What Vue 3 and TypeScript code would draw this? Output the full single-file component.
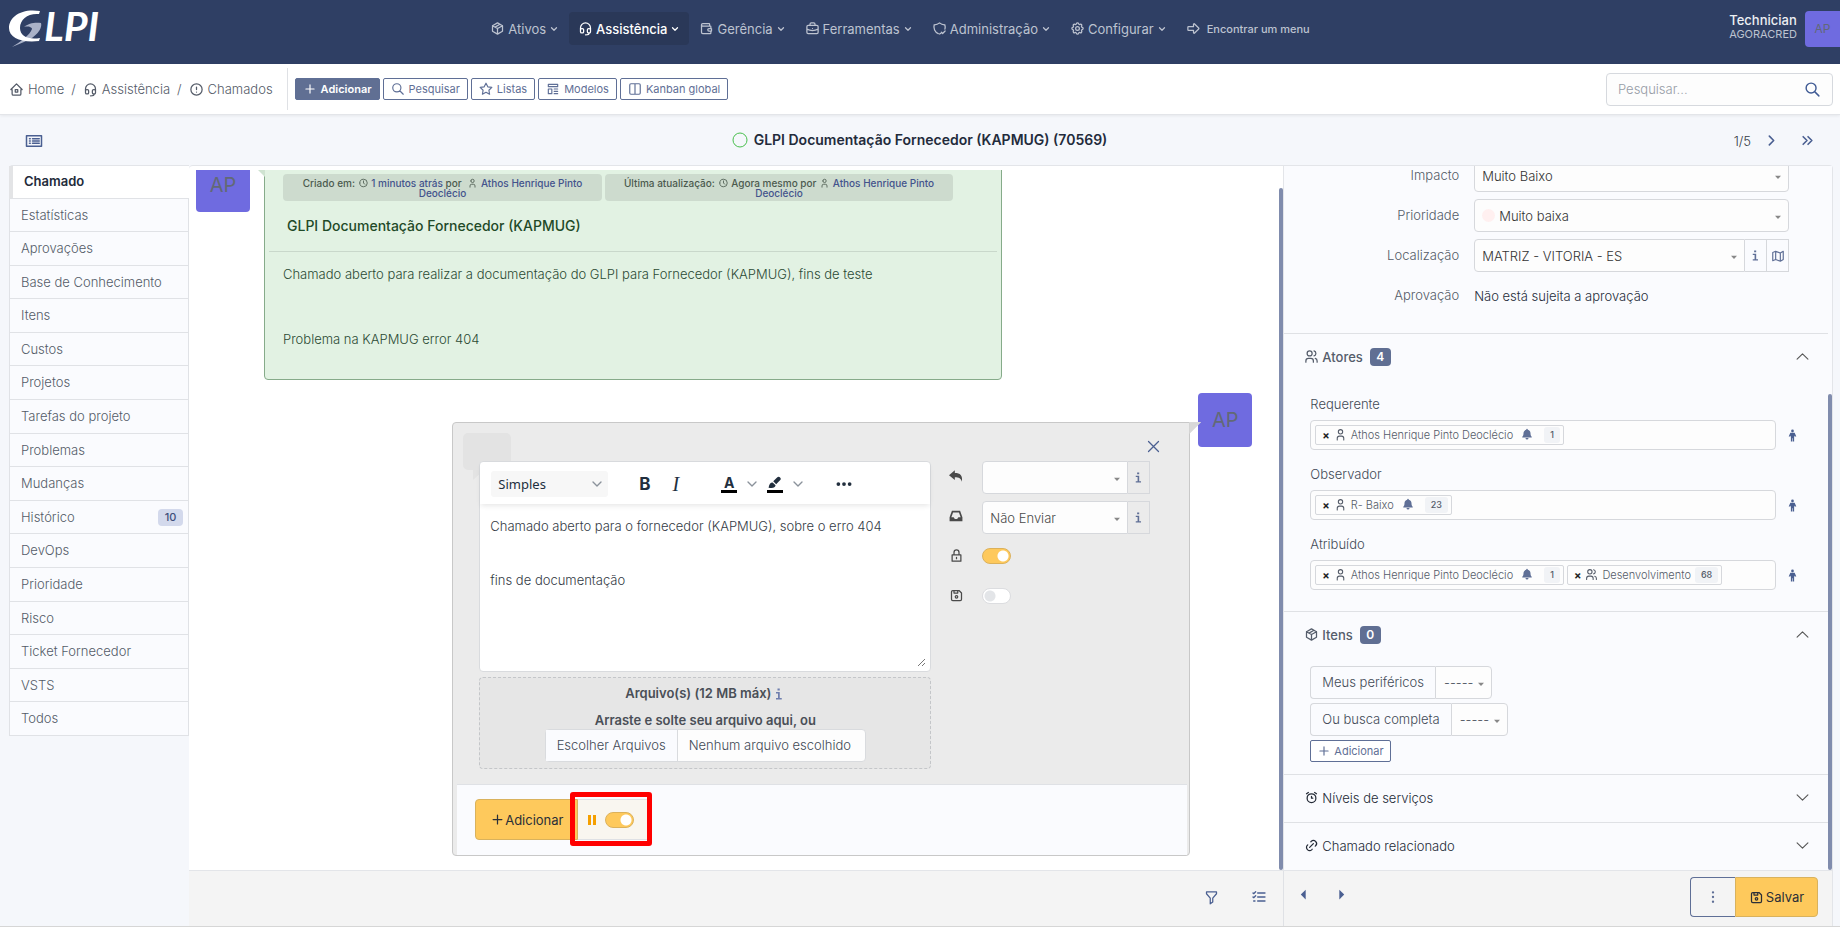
<script setup lang="ts">
import { h, ref } from 'vue'

const paths: Record<string, string> = {
  package: 'M12 3l8 4.5v9l-8 4.5l-8 -4.5v-9z M12 12l8 -4.5 M12 12v9 M12 12l-8 -4.5 M16 5.25l-8 4.5',
  headset: 'M4 14v-3a8 8 0 1 1 16 0v3 M18 19c0 1.657 -2.686 3 -6 3 M4 14a2 2 0 0 1 2 -2h1a2 2 0 0 1 2 2v3a2 2 0 0 1 -2 2h-1a2 2 0 0 1 -2 -2z M15 14a2 2 0 0 1 2 -2h1a2 2 0 0 1 2 2v3a2 2 0 0 1 -2 2h-1a2 2 0 0 1 -2 -2z',
  wallet: 'M17 8v-3a1 1 0 0 0 -1 -1h-10a2 2 0 0 0 0 4h12a1 1 0 0 1 1 1v3m0 4v3a1 1 0 0 1 -1 1h-12a2 2 0 0 1 -2 -2v-12 M20 12v4h-4a2 2 0 0 1 0 -4h4',
  briefcase: 'M3 9a2 2 0 0 1 2 -2h14a2 2 0 0 1 2 2v9a2 2 0 0 1 -2 2h-14a2 2 0 0 1 -2 -2z M8 7v-2a2 2 0 0 1 2 -2h4a2 2 0 0 1 2 2v2 M12 12v.01 M3 13a20 20 0 0 0 18 0',
  shield: 'M10 20.2a12 12 0 0 1 -6.500 -14.2a12 12 0 0 0 8.5 -3a12 12 0 0 0 8.5 3a12 12 0 0 1 .2 7 M12 20.800l2 -1 M15 18l2 2l4 -4',
  settings: 'M10.325 4.317c.426 -1.756 2.924 -1.756 3.35 0a1.724 1.724 0 0 0 2.573 1.066c1.543 -.94 3.31 .826 2.37 2.37a1.724 1.724 0 0 0 1.065 2.572c1.756 .426 1.756 2.924 0 3.35a1.724 1.724 0 0 0 -1.066 2.573c.94 1.543 -.826 3.31 -2.37 2.37a1.724 1.724 0 0 0 -2.572 1.065c-.426 1.756 -2.924 1.756 -3.35 0a1.724 1.724 0 0 0 -2.573 -1.066c-1.543 .94 -3.31 -.826 -2.37 -2.37a1.724 1.724 0 0 0 -1.065 -2.572c-1.756 -.426 -1.756 -2.924 0 -3.35a1.724 1.724 0 0 0 1.066 -2.573c-.94 -1.543 .826 -3.31 2.37 -2.37c1 .608 2.296 .07 2.572 -1.065z M9 12a3 3 0 1 0 6 0a3 3 0 0 0 -6 0',
  arrowBig: 'M4 9h8v-3.586a1 1 0 0 1 1.707 -.707l6.586 6.586a1 1 0 0 1 0 1.414l-6.586 6.586a1 1 0 0 1 -1.707 -.707v-3.586h-8a1 1 0 0 1 -1 -1v-4a1 1 0 0 1 1 -1z',
  home: 'M5 12h-2l9 -9l9 9h-2v7a2 2 0 0 1 -2 2h-10a2 2 0 0 1 -2 -2z M10 12h4v4h-4z',
  alert: 'M3 12a9 9 0 1 0 18 0a9 9 0 1 0 -18 0 M12 8v4 M12 16v.01',
  plus: 'M12 5v14 M5 12h14',
  search: 'M3 10a7 7 0 1 0 14 0a7 7 0 1 0 -14 0 M21 21l-6 -6',
  star: 'M12 17.75l-6.172 3.245l1.179 -6.873l-5 -4.867l6.9 -1l3.086 -6.253l3.086 6.253l6.900 1l-5 4.867l1.179 6.873z',
  template: 'M4 4h16v4h-16z M4 12h6v8h-6z M14 12h6 M14 16h6 M14 20h6',
  columns: 'M5 3h14a2 2 0 0 1 2 2v14a2 2 0 0 1 -2 2h-14a2 2 0 0 1 -2 -2v-14a2 2 0 0 1 2 -2z M12 3v18',
  down: 'M6 9l6 6l6 -6',
  up: 'M2 17l10 -10l10 10',
  wideDown: 'M2 7l10 10l10 -10',
  right: 'M8 4l8 8l-8 8',
  doubleRight: 'M4 5l7 7l-7 7 M13 5l7 7l-7 7',
  close: 'M4 4l16 16 M20 4l-16 16',
  clock: 'M3 12a9 9 0 1 0 18 0a9 9 0 1 0 -18 0 M12 7v5l3 3',
  user: 'M8 7a4 4 0 1 0 8 0a4 4 0 1 0 -8 0 M6 22v-3a4 4 0 0 1 4 -4h4a4 4 0 0 1 4 4v3',
  users: 'M5 7a4 4 0 1 0 8 0a4 4 0 1 0 -8 0 M3 21v-2a4 4 0 0 1 4 -4h4a4 4 0 0 1 4 4v2 M16 3.130a4 4 0 0 1 0 7.750 M21 21v-2a4 4 0 0 0 -3 -3.850',
  lock: 'M5 11h14v10h-14z M8 11v-4a4 4 0 0 1 8 0v4 M12 15v2',
  save: 'M6 4h10l4 4v10a2 2 0 0 1 -2 2h-12a2 2 0 0 1 -2 -2v-12a2 2 0 0 1 2 -2z M10 14a2 2 0 1 0 4 0a2 2 0 1 0 -4 0 M14 4v4h-6v-4',
  map: 'M3 6l5 -2v14l-5 2z M8 4l8 3v14l-8 -3 M16 7l5 -3v14l-5 3',
  alarm: 'M5 13a7 7 0 1 0 14 0a7 7 0 1 0 -14 0 M12 10v3h2 M7 4l-3 2 M17 4l3 2',
  link: 'M9 15l6 -6 M11 6l.463 -.536a5 5 0 0 1 7.071 7.072l-.534 .464 M13 18l-.397 .534a5.068 5.068 0 0 1 -7.127 0a4.972 4.972 0 0 1 0 -7.071l.524 -.463',
  filter: 'M4 3h16v3l-6 7v6l-4 3v-9l-6 -7z',
  checklist: 'M10 6h11 M10 12h11 M10 18h11 M3 6l1 1l3 -3 M3 12l1 1l3 -3 M4 18h2',
  listBox: 'M2 5h20v14h-20z M6 9h1 M6 12h1 M6 15h1 M10 9h9 M10 12h9 M10 15h9',
}

const Icon = (props: { name: string; size?: number; weight?: number }) =>
  h('svg', {
    class: 'icon', width: props.size ?? 16, height: props.size ?? 16, viewBox: '0 0 24 24', fill: 'none',
    stroke: 'currentColor', 'stroke-width': props.weight ?? 2, 'stroke-linecap': 'round', 'stroke-linejoin': 'round', 'aria-hidden': 'true',
  }, [h('path', { d: paths[props.name] })])
Icon.props = ['name', 'size', 'weight']

const solids: Record<string, string> = {
  caret: 'M3 8h18l-9 10z',
  bell: 'M12 1.500a1.500 1.500 0 0 1 1.500 1.500v.7c3.500 .8 5.500 3.300 5.500 6.800c0 4 1 5.500 2.500 7v1.500h-19v-1.500c1.500 -1.500 2.500 -3 2.500 -7c0 -3.500 2 -6 5.500 -6.800v-.7a1.500 1.500 0 0 1 1.500 -1.500z M9 20h6a3 3 0 0 1 -6 0z',
  person: 'M9.500 3.500a2.500 2.500 0 1 0 5 0a2.500 2.500 0 1 0 -5 0 M8 7h8l3 7h-3l-1 -2v11h-2.500v-6h-1v6h-2.500v-11l-1 2h-3z',
  reply: 'M10 2v5c9 0 14 4 12 15c-1 -6 -5 -8 -12 -8v5l-10 -8.500z',
  inbox: 'M5 3h14l4 11v7h-22v-7z M7 6l-3 8h4l2 3h4l2 -3h4l-3 -8z',
  prev: 'M16 3v18l-9 -9z',
  next: 'M8 3v18l9 -9z',
  info: 'M9 1h4.500v4h-4.500z M6 8h7.500v12h4v3h-11.500v-3h4v-9h-4z',
  pause: 'M4 2h6v20h-6z M14 2h6v20h-6z',
  dots: 'M2 12a2.500 2.500 0 1 0 5 0a2.500 2.500 0 1 0 -5 0 M9.500 12a2.500 2.500 0 1 0 5 0a2.500 2.500 0 1 0 -5 0 M17 12a2.500 2.500 0 1 0 5 0a2.500 2.500 0 1 0 -5 0',
  kebab: 'M12 2a2 2 0 1 0 0 4a2 2 0 1 0 0 -4 M12 10a2 2 0 1 0 0 4a2 2 0 1 0 0 -4 M12 18a2 2 0 1 0 0 4a2 2 0 1 0 0 -4',
  brush: 'M1 20c1 -6 3 -9 7 -9l5 5c-1 4 -4 5 -12 4z M9 9l7 -7c3 -3 8 2 5 5l-7 7z',
}

const Solid = (props: { name: string; size?: number }) =>
  h('svg', { class: 'icon', width: props.size ?? 14, height: props.size ?? 14, viewBox: '0 0 24 24', fill: 'currentColor', 'fill-rule': 'evenodd', 'aria-hidden': 'true' },
    [h('path', { d: solids[props.name] })])
Solid.props = ['name', 'size']

const menu = [
  { label: 'Ativos', icon: 'package' },
  { label: 'Assistência', icon: 'headset', active: true },
  { label: 'Gerência', icon: 'wallet' },
  { label: 'Ferramentas', icon: 'briefcase' },
  { label: 'Administração', icon: 'shield' },
  { label: 'Configurar', icon: 'settings' },
]

const actions = [
  { label: 'Adicionar', icon: 'plus', primary: true },
  { label: 'Pesquisar', icon: 'search' },
  { label: 'Listas', icon: 'star' },
  { label: 'Modelos', icon: 'template' },
  { label: 'Kanban global', icon: 'columns' },
]

const tabs: { label: string; count?: number }[] = [
  { label: 'Chamado' }, { label: 'Estatísticas' }, { label: 'Aprovações' }, { label: 'Base de Conhecimento' },
  { label: 'Itens' }, { label: 'Custos' }, { label: 'Projetos' }, { label: 'Tarefas do projeto' },
  { label: 'Problemas' }, { label: 'Mudanças' }, { label: 'Histórico', count: 10 }, { label: 'DevOps' },
  { label: 'Prioridade' }, { label: 'Risco' }, { label: 'Ticket Fornecedor' }, { label: 'VSTS' }, { label: 'Todos' },
]

const actors = [
  { id: 'requerente', label: 'Requerente', chips: [{ name: 'Athos Henrique Pinto Deoclécio', count: 1, group: false }] },
  { id: 'observador', label: 'Observador', chips: [{ name: 'R- Baixo', count: 23, group: false }] },
  { id: 'atribuido', label: 'Atribuído', chips: [{ name: 'Athos Henrique Pinto Deoclécio', count: 1, group: false }, { name: 'Desenvolvimento', count: 68, group: true }] },
]

const message = ref('Chamado aberto para o fornecedor (KAPMUG), sobre o erro 404\n\n\nfins de documentação')
const isPrivate = ref(true)
const saveDraft = ref(false)
const pending = ref(true)
</script>

<template>
  <div class="page">
    <header class="topbar">
      <a href="#" class="logo" aria-label="GLPI">
        <svg width="112" height="56" viewBox="0 0 112 56">
          <path d="M24 27c4 -4 12 -5 17 -4c2 7 -8 16 -17 19l-12 5c8 -5 18 -12 20 -18c0 -2 -5 -3 -8 -2z" fill="#aab2c8" />
          <path d="M40 11c-19 -3 -31 6 -31 17c0 10 13 15 30 13l1 -3c-12 2 -20 -2 -20 -10c0 -9 8 -15 19 -14z" fill="#fff" />
          <text x="44" y="41" class="logo-text">LPI</text>
        </svg>
      </a>
      <nav class="menu">
        <a v-for="m in menu" :key="m.label" href="#" :class="['menu-item', { active: m.active }]">
          <Icon :name="m.icon" :size="15" /><span>{{ m.label }}</span><Icon name="down" :size="10" :weight="3" />
        </a>
        <a href="#" class="menu-item find"><Icon name="arrowBig" :size="15" /><span>Encontrar um menu</span></a>
      </nav>
      <div class="account">
        <div class="account-text"><strong>Technician</strong><span>AGORACRED</span></div>
        <div class="avatar small">AP</div>
      </div>
    </header>

    <div class="subbar">
      <nav class="crumbs">
        <a href="#"><Icon name="home" :size="15" />Home</a><i>/</i>
        <a href="#"><Icon name="headset" :size="15" />Assistência</a><i>/</i>
        <a href="#"><Icon name="alert" :size="15" />Chamados</a>
      </nav>
      <div class="actions">
        <button v-for="a in actions" :key="a.label" :class="['btn-sm', { primary: a.primary }]">
          <Icon :name="a.icon" :size="14" />{{ a.label }}
        </button>
      </div>
      <form class="search" @submit.prevent>
        <input type="text" placeholder="Pesquisar..." aria-label="Pesquisar" />
        <button aria-label="Buscar"><Icon name="search" :size="17" /></button>
      </form>
    </div>

    <div class="titlebar">
      <button class="plain" aria-label="Lista"><Icon name="listBox" :size="18" /></button>
      <h1><svg width="16" height="16" aria-hidden="true"><circle cx="8" cy="8" r="7" fill="none" stroke="#49bf4d" /></svg>GLPI Documentação Fornecedor (KAPMUG) (70569)</h1>
      <div class="pager">
        <span>1/5</span>
        <button class="plain" aria-label="Próximo"><Icon name="right" :size="13" :weight="3" /></button>
        <button class="plain" aria-label="Último"><Icon name="doubleRight" :size="13" :weight="3" /></button>
      </div>
    </div>

    <div class="main">
      <nav class="tabs">
        <a v-for="(t, i) in tabs" :key="t.label" href="#" :class="{ active: i === 0 }">
          {{ t.label }}<span v-if="t.count" class="count">{{ t.count }}</span>
        </a>
      </nav>

      <div class="panel">
        <div class="columns">
          <div class="timeline-wrap">
            <div class="timeline">
              <article class="entry">
                <div class="avatar">AP</div>
                <div class="bubble request">
                  <div class="metas">
                    <p class="meta first">Criado em: <Icon name="clock" :size="11" /> <a href="#">1 minutos atrás</a> por <Icon name="user" :size="11" /> <a href="#">Athos Henrique Pinto Deoclécio</a></p>
                    <p class="meta second">Última atualização: <Icon name="clock" :size="11" /> Agora mesmo por <Icon name="user" :size="11" /> <a href="#">Athos Henrique Pinto Deoclécio</a></p>
                  </div>
                  <h2>GLPI Documentação Fornecedor (KAPMUG)</h2>
                  <div class="request-text">
                    <p>Chamado aberto para realizar a documentação do GLPI para Fornecedor (KAPMUG), fins de teste</p>
                    <p>Problema na KAPMUG error 404</p>
                  </div>
                </div>
              </article>

              <article class="entry mine">
                <form class="bubble reply" @submit.prevent>
                  <svg class="watermark" width="48" height="48" viewBox="0 0 48 48" aria-hidden="true"><path d="M5 0h38a5 5 0 0 1 5 5v27a5 5 0 0 1 -5 5h-22l-11 10v-10h-5a5 5 0 0 1 -5 -5v-27a5 5 0 0 1 5 -5z" fill="#e3e3e3" /></svg>
                  <button type="button" class="plain dismiss" aria-label="Fechar"><Icon name="close" :size="15" /></button>
                  <div class="reply-body">
                    <div class="editor-col">
                      <div class="editor">
                        <div class="toolbar">
                          <label class="format"><select aria-label="Formato"><option>Simples</option></select><Icon name="down" :size="16" /></label>
                          <button type="button" class="tool bold" aria-label="Negrito">B</button>
                          <button type="button" class="tool italic" aria-label="Itálico">I</button>
                          <button type="button" class="tool color" aria-label="Cor do texto">A</button>
                          <button type="button" class="tool arrow" aria-label="Cores do texto"><Icon name="down" :size="16" /></button>
                          <button type="button" class="tool color" aria-label="Realce"><Solid name="brush" :size="14" /></button>
                          <button type="button" class="tool arrow" aria-label="Cores de realce"><Icon name="down" :size="16" /></button>
                          <button type="button" class="tool more" aria-label="Mais"><Solid name="dots" :size="18" /></button>
                        </div>
                        <textarea v-model="message" aria-label="Mensagem" spellcheck="false"></textarea>
                        <svg class="grip" width="8" height="8" viewBox="0 0 8 8" aria-hidden="true"><path d="M0 7l7 -7M4 7l3 -3" stroke="#777" fill="none" /></svg>
                      </div>
                      <div class="dropzone">
                        <p>Arquivo(s) (12 MB máx)<Solid name="info" :size="12" /></p>
                        <p>Arraste e solte seu arquivo aqui, ou</p>
                        <label class="file"><input type="file" class="hidden-input" multiple /><span>Escolher Arquivos</span><span>Nenhum arquivo escolhido</span></label>
                      </div>
                    </div>
                    <div class="options">
                      <Solid name="reply" :size="14" />
                      <div class="group"><div class="select"><select aria-label="Modelo de resposta"><option></option></select><Solid name="caret" :size="8" /></div><button type="button" class="addon" aria-label="Informação"><Solid name="info" :size="11" /></button></div>
                      <Solid name="inbox" :size="14" />
                      <div class="group"><div class="select"><select aria-label="Origem"><option>Não Enviar</option></select><Solid name="caret" :size="8" /></div><button type="button" class="addon" aria-label="Informação"><Solid name="info" :size="11" /></button></div>
                      <Icon name="lock" :size="15" />
                      <input v-model="isPrivate" type="checkbox" class="toggle" aria-label="Privado" />
                      <Icon name="save" :size="15" />
                      <input v-model="saveDraft" type="checkbox" class="toggle" aria-label="Salvar na base" />
                    </div>
                  </div>
                  <div class="reply-foot">
                    <button class="btn-yellow"><Icon name="plus" :size="15" />Adicionar</button>
                    <label class="pending"><Solid name="pause" :size="12" /><input v-model="pending" type="checkbox" class="toggle" aria-label="Pendente" /><span class="highlight"></span></label>
                  </div>
                </form>
                <div class="avatar">AP</div>
              </article>
            </div>
            <span class="thumb thumb-left"></span>
          </div>

          <aside class="fields">
            <section class="general">
              <div class="row"><label for="impacto">Impacto</label><div class="select"><select id="impacto"><option>Muito Baixo</option></select><Solid name="caret" :size="8" /></div></div>
              <div class="row"><label for="prioridade">Prioridade</label><div class="select priority"><select id="prioridade"><option>Muito baixa</option></select><Solid name="caret" :size="8" /></div></div>
              <div class="row"><label for="local">Localização</label><div class="group"><div class="select"><select id="local"><option>MATRIZ - VITORIA - ES</option></select><Solid name="caret" :size="8" /></div><button class="addon" aria-label="Informação"><Solid name="info" :size="11" /></button><button class="addon" aria-label="Mapa"><Icon name="map" :size="14" /></button></div></div>
              <div class="row"><span>Aprovação</span><b>Não está sujeita a aprovação</b></div>
            </section>
            <section>
              <button class="head open"><Icon name="users" :size="15" /><span>Atores</span><em>4</em><Icon name="up" :size="13" /></button>
              <div class="actors">
                <div v-for="a in actors" :key="a.id" class="actor">
                  <label :for="a.id">{{ a.label }}</label>
                  <div class="actor-line">
                    <div class="tagbox">
                      <span v-for="c in a.chips" :key="c.name" class="chip">
                        <button :aria-label="'Remover ' + c.name">×</button><Icon :name="c.group ? 'users' : 'user'" :size="13" /><span>{{ c.name }}</span><Solid v-if="!c.group" name="bell" :size="12" /><small>{{ c.count }}</small>
                      </span>
                      <input :id="a.id" type="text" />
                    </div>
                    <button class="plain" aria-label="Atribuir a mim"><Solid name="person" :size="13" /></button>
                  </div>
                </div>
              </div>
            </section>
            <section>
              <button class="head open"><Icon name="package" :size="15" /><span>Itens</span><em>0</em><Icon name="up" :size="13" /></button>
              <div class="items">
                <div class="picker"><label for="meus">Meus periféricos</label><div class="select"><select id="meus"><option>-----</option></select><Solid name="caret" :size="8" /></div></div>
                <div class="picker"><label for="busca">Ou busca completa</label><div class="select"><select id="busca"><option>-----</option></select><Solid name="caret" :size="8" /></div></div>
                <button class="btn-sm"><Icon name="plus" :size="14" />Adicionar</button>
              </div>
            </section>
            <section><button class="head"><Icon name="alarm" :size="15" /><span>Níveis de serviços</span><Icon name="wideDown" :size="13" /></button></section>
            <section><button class="head"><Icon name="link" :size="15" /><span>Chamado relacionado</span><Icon name="wideDown" :size="13" /></button></section>
            <span class="thumb thumb-right"></span>
          </aside>
        </div>

        <footer class="footer">
          <div class="foot-left">
            <button class="plain" aria-label="Filtrar"><Icon name="filter" :size="15" /></button>
            <button class="plain" aria-label="Tarefas"><Icon name="checklist" :size="16" /></button>
          </div>
          <div class="foot-right">
            <button class="plain" aria-label="Anterior"><Solid name="prev" :size="13" /></button>
            <button class="plain" aria-label="Seguinte"><Solid name="next" :size="13" /></button>
            <div class="save-group">
              <button class="more-btn" aria-label="Mais opções"><Solid name="kebab" :size="14" /></button>
              <button class="btn-yellow"><Icon name="save" :size="15" />Salvar</button>
            </div>
          </div>
        </footer>
      </div>
    </div>
  </div>
</template>

<style>
body {
  margin: 0;
}
</style>

<style scoped>
.page, .page * {
  box-sizing: border-box;
}
.page {
  display: flex;
  flex-direction: column;
  height: 100vh;
  overflow: hidden;
  background: #f5f7fb;
  color: #343b45;
  font: 300 13px/18px Inter, "Noto Sans", sans-serif;
}
a {
  color: inherit;
  text-decoration: none;
}
button, input, select, textarea {
  font: inherit;
  color: inherit;
  margin: 0;
}
button {
  padding: 0;
  cursor: pointer;
}
p, h1, h2 {
  margin: 0;
}
.icon {
  flex: none;
}
.plain {
  display: inline-flex;
  padding: 0;
  border: 0;
  background: none;
  color: #4a5f91;
}
.avatar {
  display: flex;
  flex: none;
  align-items: center;
  justify-content: center;
  width: 54px;
  height: 54px;
  border-radius: 4px;
  background: #6f6be0;
  color: #626976;
  font-size: 20px;
  font-weight: 400;
}

/* top bar */
.topbar {
  display: grid;
  flex: none;
  grid-template-columns: 1fr auto 1fr;
  align-items: start;
  height: 64px;
  background: #2f3f64;
  color: #bdc3d0;
  font-weight: 400;
}
.logo {
  display: flex;
}
.logo-text {
  fill: #fff;
  font: italic 700 41px Lato, sans-serif;
}
.menu {
  display: flex;
  gap: 1px;
  padding: 12px 40px 0 0;
}
.menu-item {
  display: flex;
  align-items: center;
  gap: 3px;
  height: 33px;
  padding: 0 9px;
  border-radius: 4px;
}
.menu-item.active {
  background: #2a3858;
  color: #fff;
  font-weight: 500;
}
.menu-item.find {
  gap: 6px;
  font-size: 11px;
  font-weight: 500;
}
.account {
  display: flex;
  justify-content: flex-end;
  gap: 8px;
  padding-top: 11px;
}
.account-text {
  display: flex;
  flex-direction: column;
  padding-top: 2px;
  font-size: 11px;
  line-height: 14px;
}
.account-text strong {
  color: #eceef3;
  font-size: 13px;
  font-weight: 500;
}
.avatar.small {
  width: 35px;
  height: 36px;
  border-radius: 4px 0 0 4px;
  font-size: 12px;
}

/* breadcrumb bar */
.subbar {
  display: flex;
  flex: none;
  align-items: center;
  height: 51px;
  padding-right: 7px;
  border-bottom: 1px solid #e3e5e9;
  background: #fff;
  box-shadow: 0 1px 3px #00000010;
}
.crumbs {
  display: flex;
  align-items: center;
  height: 42px;
  gap: 7px;
  padding: 0 14px 0 9px;
  border-right: 1px solid #dfe1e5;
  color: #545b68;
}
.crumbs a {
  display: flex;
  align-items: center;
  gap: 4px;
}
.crumbs i {
  font-style: normal;
}
.actions {
  display: flex;
  gap: 3px;
  padding-left: 7px;
}
.btn-sm {
  display: inline-flex;
  align-items: center;
  gap: 4px;
  height: 22px;
  padding: 0 7px;
  border: 1px solid #5f6f96;
  border-radius: 2px;
  background: #fff;
  color: #5f6f96;
  font-size: 11px;
  font-weight: 400;
}
.btn-sm.primary {
  background: #606f93;
  color: #fff;
  font-weight: 600;
}
.search {
  display: flex;
  width: 227px;
  height: 33px;
  margin-left: auto;
  border: 1px solid #d6d9de;
  border-radius: 4px;
  background: #fdfdfd;
}
.search input {
  flex: 1;
  min-width: 0;
  padding: 0 11px;
  border: 0;
  background: none;
}
.search input::placeholder {
  color: #969ca6;
}
.search button {
  display: flex;
  align-items: center;
  padding-right: 11px;
  border: 0;
  background: none;
  color: #3f5a94;
}

/* title */
.titlebar {
  display: grid;
  flex: none;
  grid-template-columns: 1fr auto 1fr;
  align-items: center;
  height: 50px;
  padding: 1px 26px 0 25px;
}
h1 {
  display: flex;
  align-items: center;
  gap: 6px;
  padding-bottom: 1px;
  color: #232b3b;
  font-size: 14px;
  font-weight: 600;
}
.pager {
  display: flex;
  align-items: center;
  justify-content: flex-end;
  gap: 23px;
}
.pager span {
  margin-right: -9px;
}

/* tabs */
.main {
  display: flex;
  flex: 1;
  min-height: 0;
  padding: 0 7px 0 9px;
  border-bottom: 1px solid #d6d6d6;
}
.tabs {
  flex: none;
  width: 180px;
  border-top: 1px solid #e3e5e9;
  border-radius: 4px 0 0 0;
}
.tabs a {
  display: flex;
  align-items: center;
  justify-content: space-between;
  padding: 7px 5px 7px 11px;
  border: 1px solid #e0e2e6;
  border-top: 0;
  background: #fafbfe;
  color: #545b68;
  line-height: 1.43;
}
.tabs a:first-child {
  padding: 6px 5px 7px 11px;
  border-left: 4px solid #e3e4e6;
  border-right: 0;
  background: #fff;
  color: #232b3b;
  font-weight: 600;
}
.count {
  width: 25px;
  border-radius: 4px;
  background: #d3d9ec;
  color: #3f4f7a;
  font-size: 11px;
  font-weight: 500;
  line-height: 17px;
  text-align: center;
}

/* panel */
.panel {
  display: flex;
  flex: 1;
  flex-direction: column;
  min-width: 0;
  border-top: 1px solid #e3e5e9;
  border-right: 1px solid #e3e5e9;
  border-radius: 4px 4px 0 0;
  background: #fff;
}
.columns {
  display: grid;
  flex: 1;
  grid-template-rows: minmax(0, 1fr);
  grid-template-columns: minmax(0, 2fr) minmax(0, 1fr);
  min-height: 0;
}
.timeline-wrap {
  position: relative;
  display: flex;
  min-width: 0;
  padding: 4px 31px 0 7px;
  border-right: 1px solid #e3e5e9;
}
.timeline {
  display: flex;
  flex: 1;
  flex-direction: column;
  justify-content: flex-end;
  gap: 13px;
  min-width: 0;
  overflow: hidden;
  padding-bottom: 14px;
}
.entry {
  display: flex;
  flex: none;
  align-items: flex-start;
  gap: 14px;
}
.entry.mine {
  justify-content: flex-end;
  gap: 8px;
}
.bubble {
  position: relative;
  flex: 0 1 738px;
  min-width: 0;
}
.request {
  margin-top: 7px;
  padding: 8px 4px 31px;
  border: 1px solid #86ab8a;
  border-radius: 0 0 4px 4px;
  background: #e2f2e3;
  color: #2b4a34;
}
.request::before {
  position: absolute;
  top: -1px;
  right: 100%;
  width: 12px;
  height: 12px;
  background: #cfe3d1;
  clip-path: polygon(0 0, 100% 0, 100% 100%);
  content: "";
}
.metas {
  display: flex;
  gap: 3px;
  padding-left: 14px;
}
.meta {
  height: 27px;
  padding: 4px 16px 0;
  border-radius: 4px;
  background: #cddbce;
  color: #4b5a4e;
  font-size: 10px;
  font-weight: 500;
  line-height: 10px;
  text-align: center;
}
.meta.first {
  width: 319px;
}
.meta.second {
  width: 348px;
}
.meta a {
  color: #43538c;
}
.meta .icon {
  height: 10px;
  overflow: visible;
  vertical-align: -1px;
}
.meta a + .icon {
  margin-left: 3px;
}
h2 {
  padding: 16px 18px;
  border-bottom: 1px solid #c9d8cb;
  color: #1f4a28;
  font-size: 14px;
  font-weight: 500;
}
.request-text {
  display: flex;
  flex-direction: column;
  gap: 47px;
  padding: 13px 14px 0;
}
.reply {
  margin-top: 29px;
  border: 1px solid #c8c8c8;
  border-radius: 4px 0 4px 4px;
  background: #ebebeb;
}
.entry.mine .avatar {
  position: relative;
}
.reply::after {
  position: absolute;
  z-index: 1;
  top: -1px;
  left: 100%;
  width: 12px;
  height: 12px;
  background: #d9d9d9;
  clip-path: polygon(0 0, 100% 0, 0 100%);
  content: "";
}
.watermark {
  position: absolute;
  top: 10px;
  left: 10px;
}
.dismiss {
  position: absolute;
  top: 16px;
  right: 28px;
}
.reply-body {
  position: relative;
  display: flex;
  gap: 18px;
  padding: 38px 39px 15px 26px;
}
.editor-col {
  flex: 1;
  min-width: 0;
}
.editor {
  position: relative;
  border: 1px solid #d9dbde;
  border-radius: 4px;
  background: #fff;
}
.toolbar {
  display: flex;
  align-items: center;
  height: 42px;
  padding: 2px 11px 0;
  box-shadow: 0 3px 5px -1px #00000018;
  color: #222f3e;
}
.format {
  position: relative;
  display: flex;
  width: 117px;
  height: 26px;
  margin-right: 21px;
}
.format select {
  width: 100%;
  padding: 0 7px;
  border: 0;
  border-radius: 3px;
  appearance: none;
  background: #f7f7f7;
  font: 13px/18px "Noto Sans", sans-serif;
}
.format .icon {
  position: absolute;
  top: 5px;
  right: 3px;
  color: #8b929b;
}
.tool {
  display: inline-flex;
  align-items: center;
  justify-content: center;
  width: 31px;
  height: 26px;
  border: 0;
  background: none;
  font-size: 17px;
}
.tool.bold {
  font-weight: 700;
}
.tool.italic {
  margin-right: 30px;
  font-family: "Liberation Serif", serif;
  font-size: 20px;
  font-style: italic;
}
.tool.color {
  width: 16px;
  height: 18px;
  border-bottom: 3px solid #000;
  font-size: 14px;
  font-weight: 700;
}
.tool.arrow {
  width: 30px;
  color: #8b929b;
}
.tool.more {
  margin-left: 15px;
}
.editor textarea {
  display: block;
  width: 100%;
  height: 167px;
  padding: 13px 10px;
  border: 0;
  background: none;
  resize: none;
  outline: 0;
}
.grip {
  position: absolute;
  right: 4px;
  bottom: 4px;
}
.dropzone {
  display: flex;
  flex-direction: column;
  align-items: center;
  margin-top: 5px;
  padding: 6px 0;
  border: 1px dashed #c4c6c9;
  border-radius: 4px;
  background: #e6e6e6;
  font-weight: 600;
}
.dropzone p + p {
  margin-top: 9px;
}
.dropzone p {
  color: #4a4f57;
}
.dropzone p .icon {
  margin-left: 2px;
  color: #6f7fae;
  vertical-align: -2px;
}
.file {
  display: flex;
  border: 1px solid #d9dbde;
  border-radius: 4px;
  background: #fdfdfd;
  color: #424a56;
  font-weight: 300;
}
.file span {
  padding: 6px 14px 7px 11px;
}
.file span:nth-of-type(1) {
  padding-right: 11px;
  border-right: 1px solid #d9dbde;
  background: #fafbfe;
}
.hidden-input {
  position: absolute;
  width: 1px;
  height: 1px;
  opacity: 0;
}
.options {
  display: grid;
  flex: none;
  grid-template-columns: 15px 168px;
  grid-auto-rows: 33px;
  gap: 7px 18px;
  align-content: start;
  align-items: center;
  color: #4a4a4a;
}
.options > .icon {
  margin-bottom: 4px;
}
.options > .toggle {
  margin-bottom: 3px;
}
.group {
  display: flex;
  min-width: 0;
}
.select {
  position: relative;
  display: flex;
  flex: 1;
  min-width: 0;
}
.select select {
  width: 100%;
  height: 33px;
  padding: 0 22px 0 7px;
  border: 1px solid #d6d8dc;
  border-radius: 4px;
  appearance: none;
  background: #fdfdfd;
}
.select .icon {
  position: absolute;
  top: 14px;
  right: 7px;
  color: #888;
}
.group select {
  border-radius: 4px 0 0 4px;
}
.addon {
  display: flex;
  align-items: center;
  justify-content: center;
  width: 22px;
  border: 1px solid #d6d8dc;
  border-left: 0;
  background: none;
  color: #5f6f96;
}
.toggle {
  width: 29px;
  height: 16px;
  border: 1px solid #dcdde0;
  border-radius: 8px;
  appearance: none;
  background: radial-gradient(circle at 7px 7px, #e3e5e8 5px, #fff 6px);
}
.toggle:checked {
  border-color: #dcb15a;
  background: radial-gradient(circle at 20px 7px, #fff 5px, #fec95c 6px);
}
.reply-foot {
  display: flex;
  margin: 0 2px 0 4px;
  padding: 14px 18px 15px;
  border-top: 1px solid #dfe1e5;
  background: #fafbfe;
}
.btn-yellow {
  display: inline-flex;
  align-items: center;
  justify-content: center;
  border: 1px solid #d9b25d;
  border-radius: 4px 0 0 4px;
  background: #fec95c;
  color: #2b2f38;
  font-weight: 400;
}
.reply-foot .btn-yellow {
  width: 103px;
  height: 41px;
}
.pending {
  position: relative;
  display: flex;
  align-items: center;
  gap: 7px;
  width: 70px;
  padding-left: 8px;
  border: 1px solid #dfe1e5;
  border-left: 0;
  background: #f9f6f0;
  color: #f59f00;
}
.highlight {
  position: absolute;
  top: -8px;
  left: -8px;
  width: 82px;
  height: 54px;
  border: 5px solid #f00;
  border-radius: 3px;
}
.thumb {
  position: absolute;
  bottom: 0;
  width: 4px;
  border-radius: 3px;
  background: #808cad;
}
.thumb-left {
  top: 22px;
  right: 0;
}
.thumb-right {
  right: 0;
  height: 476px;
}

/* field column */
.fields {
  position: relative;
  display: flex;
  flex-direction: column;
  justify-content: flex-end;
  min-width: 0;
  overflow: hidden;
  padding-right: 4px;
  background: #fafbfe;
  color: #424a56;
}
.fields section {
  flex: none;
}
.fields section + section {
  border-top: 1px solid #dfe1e5;
}
.general {
  display: flex;
  flex-direction: column;
  gap: 7px;
  padding: 0 39px 21px 0;
}
.row {
  display: grid;
  grid-template-columns: 35fr 63fr;
  gap: 15px;
  align-items: center;
  min-height: 33px;
}
.row > :first-child {
  padding-bottom: 2px;
  color: #545b68;
  text-align: right;
}
.row b {
  color: #262d3b;
  font-weight: 300;
}
.row select {
  color: #333;
}
.priority::before {
  position: absolute;
  top: 10px;
  left: 8px;
  width: 13px;
  height: 13px;
  border-radius: 50%;
  background: #fff0f0;
  content: "";
}
.priority select {
  padding-left: 24px;
}
.head {
  display: flex;
  align-items: center;
  width: 100%;
  height: 47px;
  padding: 0 19px 2px 20px;
  border: 0;
  background: none;
  color: #232a36;
  text-align: left;
}
.head.open {
  color: #555d6b;
  font-weight: 500;
}
.head span {
  margin-left: 3px;
}
.head em {
  width: 21px;
  margin-left: 7px;
  border-radius: 4px;
  background: #606f93;
  color: #fff;
  font-size: 12px;
  font-style: normal;
  font-weight: 600;
  line-height: 18px;
  text-align: center;
}
.head .icon:last-child {
  margin-left: auto;
  color: #555;
}
.actors {
  display: flex;
  flex-direction: column;
  gap: 15px;
  padding: 14px 29px 21px 26px;
}
.actor {
  display: flex;
  flex-direction: column;
  gap: 7px;
}
.actor-line {
  display: flex;
  align-items: center;
  gap: 10px;
}
.tagbox {
  display: flex;
  flex: 1;
  align-items: center;
  gap: 3px;
  min-width: 0;
  height: 30px;
  padding: 0 4px;
  border: 1px solid #d6d8dc;
  border-radius: 4px;
  background: #fdfdfd;
}
.tagbox > input {
  flex: 1;
  width: 0;
  min-width: 0;
  border: 0;
  background: none;
  outline: 0;
}
.chip {
  display: flex;
  align-items: center;
  gap: 4px;
  height: 20px;
  padding: 0 3px 0 6px;
  border: 1px solid #d6d8dc;
  border-radius: 2px;
  color: #545b68;
  font-size: 11px;
}
.chip button {
  border: 0;
  background: none;
  color: #222;
  font-weight: 700;
}
.chip .icon {
  margin-bottom: 2px;
}
.chip span + .icon {
  margin: 0 7px 2px 4px;
  color: #5f6f96;
}
.chip small {
  padding: 0 6px;
  border-radius: 3px;
  background: #f1f3f6;
  font-size: 9px;
  font-weight: 500;
  line-height: 16px;
}
.items {
  display: flex;
  flex-direction: column;
  align-items: flex-start;
  gap: 4px;
  padding: 7px 26px 12px;
}
.items .btn-sm {
  padding: 0 6px;
  gap: 3px;
}
.picker {
  display: flex;
}
.picker label {
  padding: 6px 11px;
  border: 1px solid #d6d8dc;
  border-right: 0;
  border-radius: 4px 0 0 4px;
}
.picker select {
  width: 57px;
  padding: 0 8px;
  border-radius: 0 4px 4px 0;
}

/* footer */
.footer {
  display: grid;
  flex: none;
  grid-template-columns: minmax(0, 2fr) minmax(0, 1fr);
  height: 56px;
  border-top: 1px solid #e3e5e9;
  background: #f4f4f4;
}
.foot-left {
  display: flex;
  align-items: center;
  justify-content: flex-end;
  gap: 32px;
  padding: 0 16px 3px 0;
  border-right: 1px solid #dfe1e5;
}
.foot-right {
  display: flex;
  align-items: center;
  gap: 25px;
  padding: 0 14px 3px 13px;
}
.foot-right > .plain {
  padding-bottom: 6px;
}
.save-group {
  display: flex;
  height: 40px;
  margin-left: auto;
}
.more-btn {
  display: flex;
  align-items: center;
  justify-content: center;
  width: 45px;
  border: 1px solid #5f6f96;
  border-right: 0;
  border-radius: 4px 0 0 4px;
  background: none;
  color: #5f6f96;
}
.save-group .btn-yellow {
  gap: 2px;
  width: 83px;
  border-radius: 0 4px 4px 0;
}
</style>
